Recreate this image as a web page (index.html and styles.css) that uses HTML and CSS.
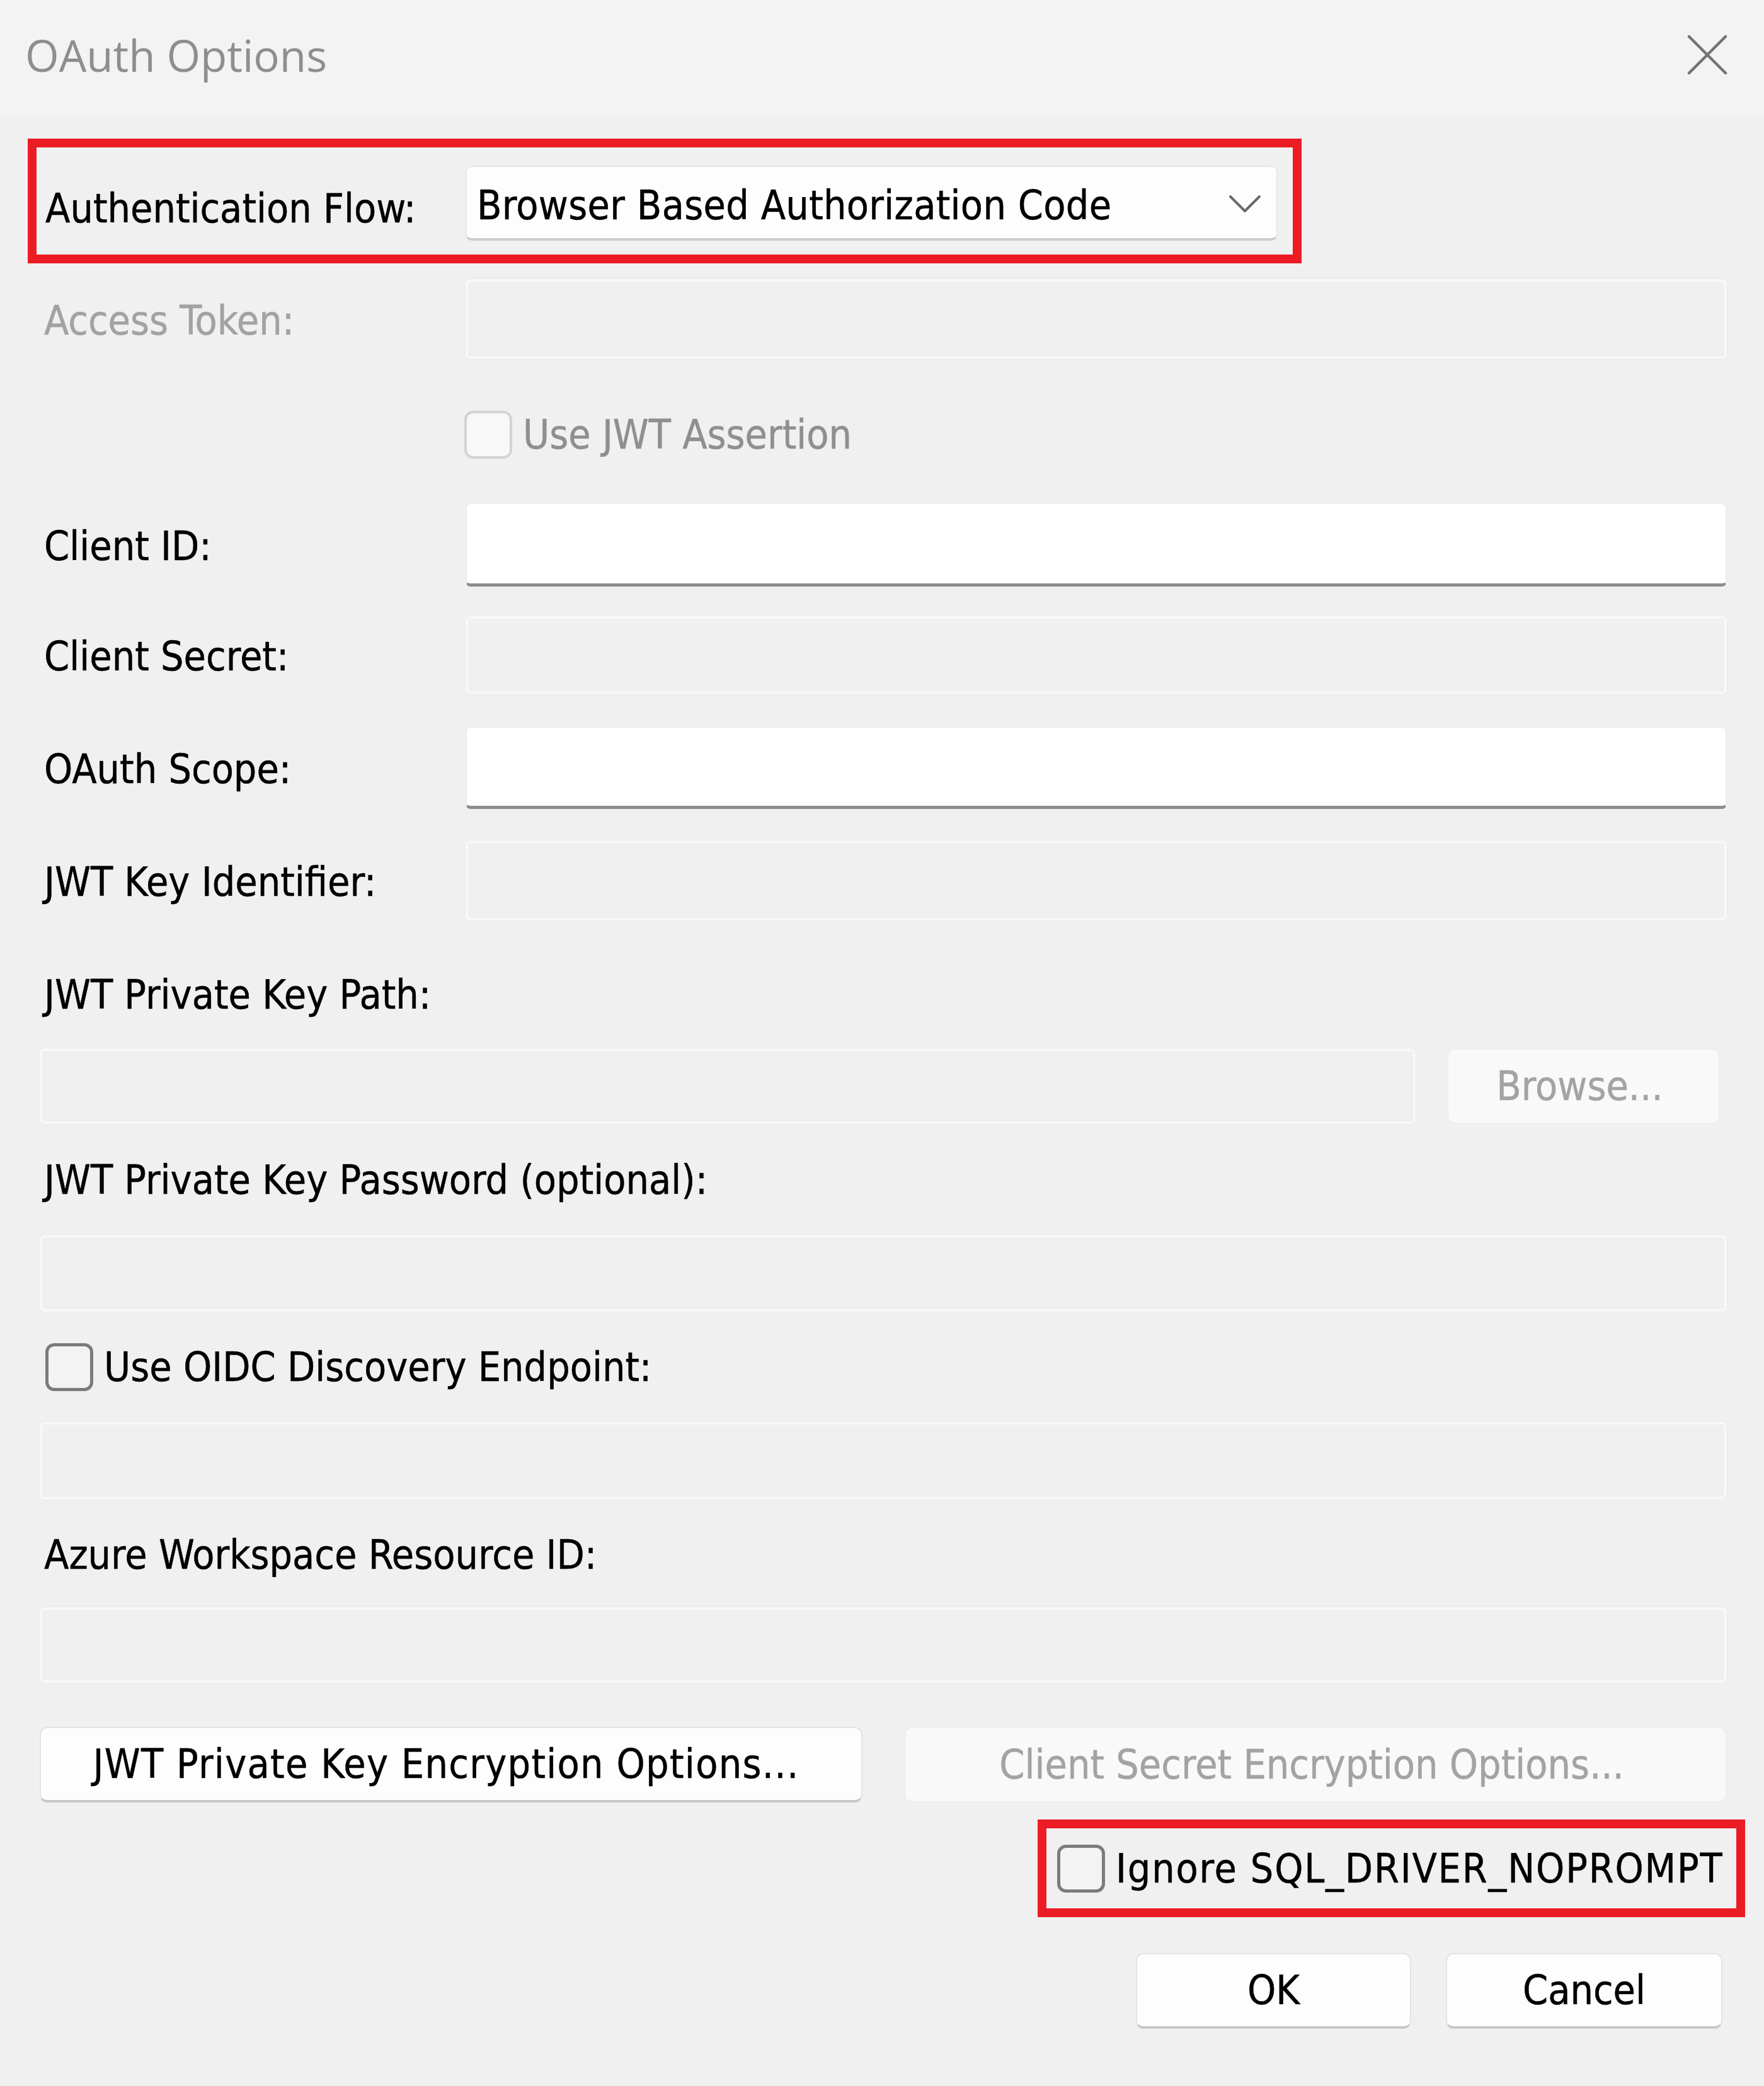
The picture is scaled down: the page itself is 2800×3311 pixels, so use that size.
FILE: index.html
```html
<!DOCTYPE html>
<html lang="en">
<head>
<meta charset="utf-8">
<title>OAuth Options</title>
<link rel="stylesheet" href="styles.css">
</head>
<body>
<div class="dialog">
  <div class="titlebar">
    <span class="title">OAuth Options</span>
    <span class="close" aria-label="Close">
      <svg viewBox="0 0 64 64" width="64" height="64"><path d="M3 3 L61 61 M61 3 L3 61" stroke="#737373" stroke-width="4.5" stroke-linecap="round" fill="none"/></svg>
    </span>
  </div>

  <div class="content">
    <div class="highlight hl-flow">
      <div class="flow-row">
        <span class="lbl lbl-flow">Authentication Flow:</span>
        <div class="combo">
          <span class="combo-text">Browser Based Authorization Code</span>
          <svg class="chev" viewBox="0 0 52 30" width="52" height="30"><path d="M3 3 L26 26 L49 3" stroke="#6a6a6a" stroke-width="4" fill="none" stroke-linecap="round" stroke-linejoin="round"/></svg>
        </div>
      </div>
    </div>

    <div class="row r-access">
      <span class="lbl disabled">Access Token:</span>
      <div class="field off"></div>
    </div>

    <div class="row r-jwt">
      <span class="lbl"></span>
      <span class="check check-off"></span>
      <span class="cb-text disabled">Use JWT Assertion</span>
    </div>

    <div class="row r-client">
      <span class="lbl">Client ID:</span>
      <div class="field on"></div>
    </div>

    <div class="row r-secret">
      <span class="lbl">Client Secret:</span>
      <div class="field off"></div>
    </div>

    <div class="row r-scope">
      <span class="lbl">OAuth Scope:</span>
      <div class="field on"></div>
    </div>

    <div class="row r-keyid">
      <span class="lbl">JWT Key Identifier:</span>
      <div class="field off"></div>
    </div>

    <div class="solo-label l-path">JWT Private Key Path:</div>
    <div class="path-row">
      <div class="field off path-field"></div>
      <div class="btn btn-off browse">Browse...</div>
    </div>

    <div class="solo-label l-pass">JWT Private Key Password (optional):</div>
    <div class="field off wide f-pass"></div>

    <div class="oidc-row">
      <span class="check check-on"></span>
      <span class="cb-text">Use OIDC Discovery Endpoint:</span>
    </div>
    <div class="field off wide f-oidc"></div>

    <div class="solo-label l-azure">Azure Workspace Resource ID:</div>
    <div class="field off wide f-azure"></div>

    <div class="enc-row">
      <div class="btn btn-jwt">JWT Private Key Encryption Options...</div>
      <div class="btn btn-off">Client Secret Encryption Options...</div>
    </div>

    <div class="noprompt-row">
      <div class="highlight hl-noprompt">
        <span class="check check-on"></span>
        <span class="cb-text noprompt-text">Ignore SQL_DRIVER_NOPROMPT</span>
      </div>
    </div>

    <div class="ok-row">
      <div class="btn ok">OK</div>
      <div class="btn cancel">Cancel</div>
    </div>
  </div>
</div>
</body>
</html>
```

FILE: styles.css
```css
html, body {
  margin: 0;
  padding: 0;
}
body {
  background: #f0f0f0;
  width: 2800px;
  height: 3311px;
  overflow: hidden;
  font-family: "DejaVu Sans Condensed", "DejaVu Sans", "Liberation Sans", sans-serif;
  font-stretch: condensed;
  font-size: 64px;
  color: #000;
  -webkit-text-stroke: 0.5px currentColor;
}
.dialog {
  width: 2800px;
  height: 3311px;
  background: #f0f0f0;
}
.titlebar {
  height: 183px;
  background: #f3f3f3;
  display: flex;
  align-items: center;
  justify-content: space-between;
  padding: 0 58px 0 40px;
  box-sizing: border-box;
}
.title {
  font-family: "Open Sans", "Noto Sans", sans-serif;
  font-stretch: normal;
  font-size: 69px;
  color: #8e8e8e;
  margin-top: -10px;
  -webkit-text-stroke: 0;
}
.close {
  width: 64px;
  height: 64px;
  display: block;
  margin-top: -10px;
}
.close svg { display: block; }

.content {
  padding: 0 59px 0 63px;
}

.highlight {
  border: 14px solid #ec1c24;
  box-sizing: border-box;
}
.hl-flow {
  margin-top: 37px;
  margin-left: -19px;
  width: 2022px;
  height: 198px;
  padding: 29px 0 0 0;
}
.flow-row {
  display: flex;
  align-items: center;
  height: 119px;
}
.lbl {
  width: 669px;
  padding-left: 7px;
  flex: none;
  white-space: nowrap;
}
.lbl-flow {
  width: 667px;
  padding-left: 14px;
  padding-top: 16px;
}
.disabled { color: #a2a2a2; }

.combo {
  width: 1289px;
  height: 119px;
  box-sizing: border-box;
  background: #fdfdfd;
  border: 2px solid #e6e6e6;
  border-bottom: 4px solid #cdcdcd;
  border-radius: 10px;
  display: flex;
  align-items: center;
  justify-content: space-between;
  padding: 0 24px 0 16px;
}
.combo-text { white-space: nowrap; letter-spacing: 0.3px; padding-top: 8px; }
.chev { display: block; margin-top: 4px; }

.row {
  display: flex;
  align-items: center;
}
.row .lbl { padding-top: 4px; }
.field {
  box-sizing: border-box;
  flex: 1;
  border-radius: 8px;
}
.field.off {
  background: #f0f0f0;
  border: 4px solid #f8f8f8;
  box-shadow: 0 0 0 1px #ebebeb;
}
.field.on {
  background: #ffffff;
  border: 2px solid #ececec;
  border-bottom: 5px solid #8c8c8c;
}
.r-access { margin-top: 25px; height: 127px; }
.r-access .field { height: 127px; }
.r-jwt { margin-top: 82px; height: 76px; }
.r-jwt .lbl { width: 667px; }
.r-client { margin-top: 70px; height: 133px; }
.r-client .field { height: 133px; }
.r-secret { margin-top: 47px; height: 124px; }
.r-secret .field { height: 124px; }
.r-scope { margin-top: 51px; height: 131px; }
.r-scope .field { height: 131px; }
.r-keyid { margin-top: 50px; height: 127px; }
.r-keyid .field { height: 127px; }

.check {
  width: 76px;
  height: 76px;
  box-sizing: border-box;
  border-radius: 14px;
  flex: none;
  display: block;
}
.check-off {
  border: 4px solid #d3d3d3;
  background: #f8f8f8;
}
.check-on {
  border: 5px solid #7b7b7b;
  background: #f3f3f3;
}
.cb-text {
  margin-left: 17px;
  white-space: nowrap;
}
.r-jwt .cb-text.disabled { color: #8f8f8f; }
.noprompt-text { letter-spacing: 1.8px; }

.solo-label {
  height: 80px;
  line-height: 80px;
  padding-left: 7px;
  white-space: nowrap;
}
.l-path { margin-top: 78px; }
.path-row {
  margin-top: 45px;
  display: flex;
  height: 120px;
  padding-right: 11px;
}
.path-field { height: 120px; }
.browse {
  width: 433px;
  margin-left: 50px;
  flex: none;
}
.l-pass { margin-top: 49px; }
.wide { display: block; width: 100%; }
.f-pass { margin-top: 47px; height: 122px; }
.oidc-row {
  margin-top: 49px;
  height: 78px;
  display: flex;
  align-items: center;
  padding-left: 9px;
}
.f-oidc { margin-top: 48px; height: 123px; }
.l-azure { margin-top: 48px; }
.f-azure { margin-top: 43px; height: 120px; }

.btn {
  box-sizing: border-box;
  height: 120px;
  background: #fdfdfd;
  border: 2px solid #e3e3e3;
  border-bottom: 4px solid #c8c8c8;
  border-radius: 12px;
  display: flex;
  align-items: center;
  justify-content: center;
  white-space: nowrap;
}
.btn-jwt { letter-spacing: 1.3px; padding-right: 16px; }
.btn-off {
  background: #f9f9f9;
  border: 2px solid #ededed;
  color: #a3a3a3;
  padding-right: 12px;
}
.enc-row {
  margin-top: 70px;
  display: grid;
  grid-template-columns: 1fr 1fr;
  column-gap: 66px;
}
.noprompt-row {
  margin-top: 27px;
  display: flex;
  justify-content: flex-end;
  margin-right: -29px;
}
.hl-noprompt {
  width: 1123px;
  height: 155px;
  display: flex;
  align-items: center;
  padding-left: 17px;
}
.ok-row {
  margin-top: 57px;
  display: flex;
  justify-content: flex-end;
  padding-right: 7px;
}
.ok { width: 437px; }
.cancel { width: 439px; margin-left: 55px; }
```
